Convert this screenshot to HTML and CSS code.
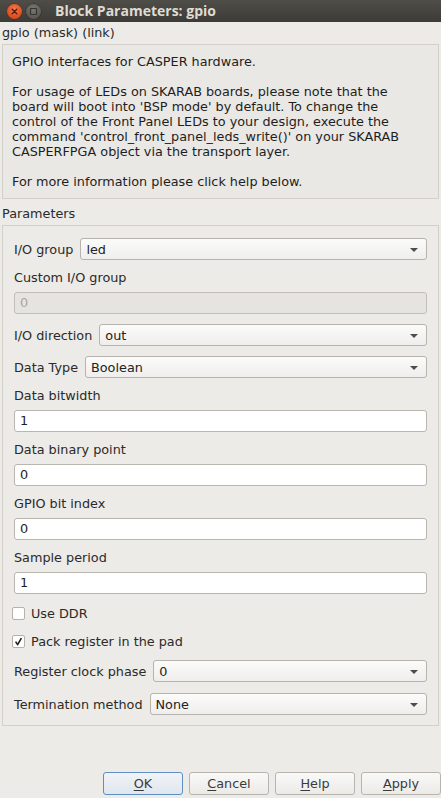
FILE: index.html
```html
<!DOCTYPE html>
<html>
<head>
<meta charset="utf-8">
<title>Block Parameters: gpio</title>
<link rel="stylesheet" href="styles.css">
</head>
<body>
<div class="window">
  <div class="titlebar">
    <span class="wbtn close">
      <svg width="15" height="15" viewBox="0 0 15 15"><path d="M5.2 5.2 L9.8 9.8 M9.8 5.2 L5.2 9.8" stroke="#4a1a0c" stroke-width="1.3" stroke-linecap="round"/></svg>
    </span>
    <span class="wbtn mini">
      <svg width="15" height="15" viewBox="0 0 15 15"><rect x="4.5" y="4.5" width="6" height="6" rx="0.5" fill="none" stroke="#35342f" stroke-width="1.2"/></svg>
    </span>
    <span class="title">Block Parameters: gpio</span>
  </div>

  <div class="mask-title">gpio (mask) (link)</div>

  <div class="desc">
    <p>GPIO interfaces for CASPER hardware.</p>
    <p>For usage of LEDs on SKARAB boards, please note that the<br>board will boot into 'BSP mode' by default. To change the<br>control of the Front Panel LEDs to your design, execute the<br>command 'control_front_panel_leds_write()' on your SKARAB<br>CASPERFPGA object via the transport layer.</p>
    <p>For more information please click help below.</p>
  </div>

  <div class="section-label">Parameters</div>

  <div class="params">
    <div class="combo-row first">
      <span class="lbl">I/O group</span>
      <div class="combo"><span>led</span><i class="arrow"></i></div>
    </div>

    <div class="field-label">Custom I/O group</div>
    <div class="field disabled">0</div>

    <div class="combo-row">
      <span class="lbl">I/O direction</span>
      <div class="combo"><span>out</span><i class="arrow"></i></div>
    </div>

    <div class="combo-row">
      <span class="lbl">Data Type</span>
      <div class="combo"><span>Boolean</span><i class="arrow"></i></div>
    </div>

    <div class="field-label">Data bitwidth</div>
    <div class="field">1</div>

    <div class="field-label">Data binary point</div>
    <div class="field">0</div>

    <div class="field-label">GPIO bit index</div>
    <div class="field">0</div>

    <div class="field-label">Sample period</div>
    <div class="field">1</div>

    <div class="check-row first-check">
      <span class="box"></span>
      <span>Use DDR</span>
    </div>
    <div class="check-row">
      <span class="box checked">
        <svg width="11" height="11" viewBox="0 0 11 11"><path d="M2.6 5.6 L4.6 8.6 L8.4 2.2" fill="none" stroke="#1e1e1e" stroke-width="1.6" stroke-linejoin="round"/></svg>
      </span>
      <span>Pack register in the pad</span>
    </div>

    <div class="combo-row after-check">
      <span class="lbl">Register clock phase</span>
      <div class="combo"><span>0</span><i class="arrow"></i></div>
    </div>

    <div class="combo-row last">
      <span class="lbl">Termination method</span>
      <div class="combo"><span>None</span><i class="arrow"></i></div>
    </div>
  </div>

  <div class="buttons">
    <button class="btn default"><u>O</u>K</button>
    <button class="btn"><u>C</u>ancel</button>
    <button class="btn"><u>H</u>elp</button>
    <button class="btn"><u>A</u>pply</button>
  </div>
</div>
</body>
</html>
```

FILE: styles.css
```css
html, body {
  margin: 0;
  padding: 0;
  background: #edebe7;
}

body {
  width: 441px;
  height: 798px;
  overflow: hidden;
  font-family: "DejaVu Sans", sans-serif;
  font-size: 12.8px;
  color: #2a2a2a;
}

.window {
  display: flex;
  flex-direction: column;
  height: 798px;
}

.titlebar {
  height: 22px;
  display: flex;
  align-items: center;
  background: linear-gradient(#4f4d48, #3c3b37);
  padding-left: 7px;
  gap: 4px;
  flex-shrink: 0;
}

.wbtn {
  width: 15px;
  height: 15px;
  border-radius: 50%;
  display: block;
  box-sizing: border-box;
}

.wbtn svg { display: block; }

.close {
  background: radial-gradient(circle at 50% 35%, #f47a4e, #e3501f 60%, #c7421a);
  box-shadow: 0 0 0 0.5px #5a2a18;
}

.mini {
  background: radial-gradient(circle at 50% 35%, #7a7974, #5f5e59 60%, #4f4e4a);
  box-shadow: 0 0 0 0.5px #2e2d29;
}

.title {
  margin-left: 10px;
  font-family: "Open Sans", "DejaVu Sans", sans-serif;
  font-weight: 700;
  font-size: 14px;
  color: #dfdbd2;
  line-height: 22px;
}

.mask-title {
  height: 22px;
  line-height: 22px;
  padding-left: 2px;
}

.desc {
  margin: 0 2px;
  border: 1px solid #d3d0ca;
  background: #eae8e4;
  padding: 9px 9px 9px 9px;
  line-height: 15px;
  color: #1e1e1e;
}

.desc p {
  margin: 0 0 15px 0;
}

.desc p:last-child { margin-bottom: 0; }

.section-label {
  padding: 7px 0 4px 2px;
  line-height: 15px;
}

.params {
  margin: 0 2px;
  border: 1px solid #d3d0ca;
  padding: 12px 11px 10px 11px;
  display: flex;
  flex-direction: column;
}

.combo-row {
  display: flex;
  align-items: center;
  gap: 7px;
  margin-top: 10px;
  height: 22px;
}

.combo-row.first { margin-top: 0; }
.combo-row.after-check { margin-top: 8px; }
.combo-row.last { margin-top: 11px; }

.lbl { white-space: nowrap; }

.combo {
  flex: 1;
  height: 22px;
  box-sizing: border-box;
  border: 1px solid #b7b3ad;
  border-radius: 3px;
  background: linear-gradient(#fbfbfa, #efeeec);
  display: flex;
  align-items: center;
  padding-left: 5px;
  position: relative;
  color: #222;
}

.arrow {
  position: absolute;
  right: 8px;
  top: 9px;
  width: 0;
  height: 0;
  border-left: 4px solid transparent;
  border-right: 4px solid transparent;
  border-top: 4px solid #4d4d4d;
}

.field-label {
  margin-top: 10px;
  line-height: 15px;
}

.field {
  margin-top: 7px;
  height: 22px;
  box-sizing: border-box;
  border: 1px solid #b9b6b0;
  border-radius: 3px;
  background: #ffffff;
  padding-left: 5px;
  line-height: 20px;
  color: #1e1e1e;
}

.field.disabled {
  background: #e6e4e0;
  color: #a8a6a2;
  border-color: #c2bfb9;
}

.check-row {
  display: flex;
  align-items: center;
  gap: 6px;
  height: 22px;
  margin-top: 6px;
  margin-left: -2px;
}

.check-row.first-check { margin-top: 8px; }

.box {
  width: 13px;
  height: 13px;
  box-sizing: border-box;
  border: 1px solid #b5b2ac;
  border-radius: 2px;
  background: #ffffff;
  display: flex;
  align-items: center;
  justify-content: center;
}

.box svg { display: block; }

.buttons {
  margin-top: auto;
  margin-bottom: 3px;
  display: flex;
  justify-content: flex-end;
  gap: 6px;
}

.btn {
  width: 80px;
  height: 23px;
  box-sizing: border-box;
  border: 1px solid #b7b4ae;
  border-radius: 3px;
  background: linear-gradient(#f9f9f8, #ebeae7);
  font-family: "DejaVu Sans", sans-serif;
  font-size: 12.8px;
  color: #3a3a3a;
  padding: 0;
  margin: 0;
}

.btn u {
  text-decoration-thickness: 1px;
  text-underline-offset: 2px;
}

.btn.default {
  border-color: #5f8fc0;
  background: linear-gradient(#f1f4f8, #dfe6ee);
}
```
